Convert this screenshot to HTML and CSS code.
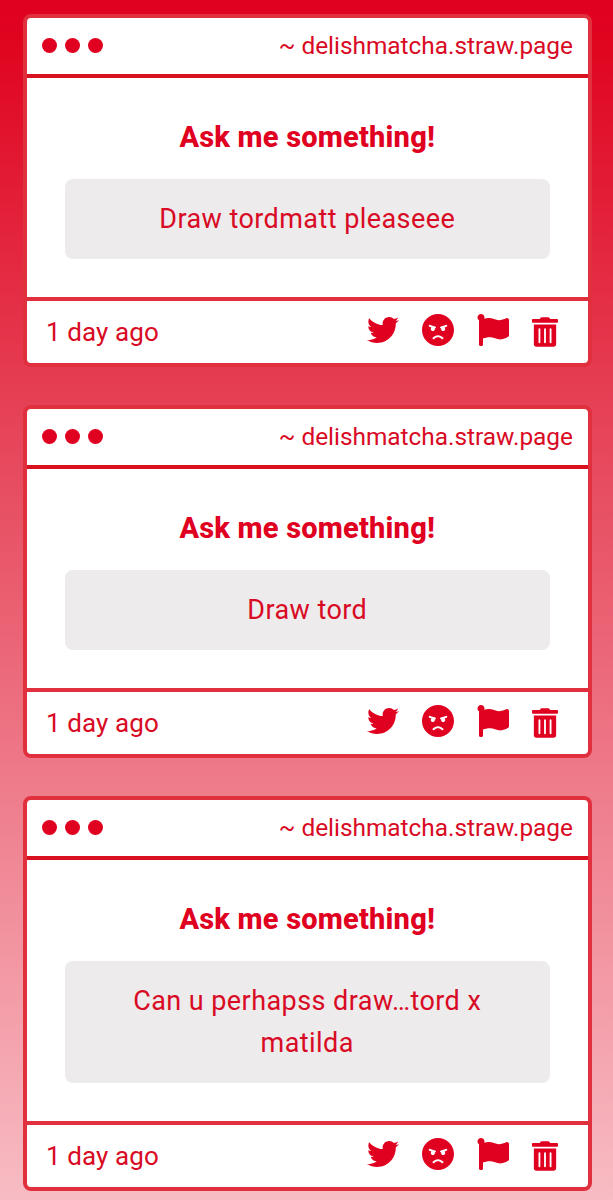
FILE: index.html
```html
<!DOCTYPE html>
<html lang="en">
<head>
    <meta charset="UTF-8">
    <meta name="viewport" content="width=device-width, initial-scale=1.0">
    <title>Inbox</title>
    <link rel="stylesheet" href="styles.css">
</head>
<body>
    <!-- icons shared by every card -->
    <svg class="sprite">
        <symbol id="twitter" viewBox="0 0 512 512"><path d="M459.37 151.716c.325 4.548.325 9.097.325 13.645 0 138.72-105.583 298.558-298.558 298.558-59.452 0-114.68-17.219-161.137-47.106 8.447.974 16.568 1.299 25.34 1.299 49.055 0 94.213-16.568 130.274-44.832-46.132-.975-84.792-31.188-98.112-72.772 6.498.974 12.995 1.624 19.818 1.624 9.421 0 18.843-1.3 27.614-3.573-48.081-9.747-84.143-51.98-84.143-102.985v-1.299c13.969 7.797 30.214 12.67 47.431 13.319-28.264-18.843-46.781-51.005-46.781-87.391 0-19.492 5.197-37.36 14.294-52.954 51.655 63.675 129.3 105.258 216.365 109.807-1.624-7.797-2.599-15.918-2.599-24.04 0-57.828 46.782-104.934 104.934-104.934 30.213 0 57.502 12.67 76.67 33.137 23.715-4.548 46.456-13.32 66.599-25.34-7.798 24.366-24.366 44.833-46.132 57.827 21.117-2.273 41.584-8.122 60.426-16.243-14.292 20.791-32.161 39.308-52.628 54.253z"/></symbol>
        <symbol id="angry" viewBox="0 8 496 496"><path d="M248 8C111 8 0 119 0 256s111 248 248 248 248-111 248-248S385 8 248 8zM136 240c0-9.3 4.1-17.5 10.5-23.4l-31-9.3c-8.5-2.5-13.3-11.5-10.7-19.9 2.5-8.5 11.4-13.2 19.9-10.7l80 24c8.5 2.5 13.3 11.5 10.7 19.9-2.1 6.9-8.4 11.4-15.3 11.4-.5 0-1.1-.2-1.7-.2.7 2.7 1.7 5.3 1.7 8.2 0 17.7-14.3 32-32 32S136 257.7 136 240zm168 154.2c-27.8-33.4-84.2-33.4-112.1 0-13.5 16.3-38.2-4.2-24.6-20.5 20-24 49.4-37.8 80.6-37.8s60.6 13.8 80.6 37.8c13.8 16.5-11.1 36.6-24.5 20.5zm76.6-186.9l-31 9.3c6.3 5.8 10.5 14.1 10.5 23.4 0 17.7-14.3 32-32 32s-32-14.3-32-32c0-2.9.9-5.6 1.7-8.2-.6.1-1.1.2-1.7.2-6.9 0-13.2-4.5-15.3-11.4-2.5-8.5 2.3-17.4 10.7-19.9l80-24c8.4-2.5 17.4 2.3 19.9 10.7 2.5 8.5-2.3 17.4-10.8 19.9z"/></symbol>
        <symbol id="flag" viewBox="0 0 512 512"><path d="M349.565 98.783C295.978 98.783 251.721 64 184.348 64c-24.955 0-47.309 4.384-68.045 12.013a55.947 55.947 0 0 0 3.586-23.562C118.117 24.015 94.806 1.206 66.338.048 34.345-1.254 8 24.296 8 56c0 19.026 9.497 35.825 24 45.945V488c0 13.255 10.745 24 24 24h16c13.255 0 24-10.745 24-24v-94.4c28.311-12.064 63.582-22.122 114.435-22.122 53.588 0 97.844 34.783 165.217 34.783 48.169 0 86.667-16.294 122.505-40.858C506.84 359.452 512 349.571 512 339.045v-243.1c0-23.393-24.269-38.87-45.485-29.016-34.338 15.948-76.454 31.854-116.95 31.854z"/></symbol>
        <symbol id="trash" viewBox="0 0 448 512"><path d="M32 464a48 48 0 0 0 48 48h288a48 48 0 0 0 48-48V128H32zm272-256a16 16 0 0 1 32 0v224a16 16 0 0 1-32 0zm-96 0a16 16 0 0 1 32 0v224a16 16 0 0 1-32 0zm-96 0a16 16 0 0 1 32 0v224a16 16 0 0 1-32 0zM432 32H312l-9.4-18.7A24 24 0 0 0 281.1 0H166.8a23.72 23.72 0 0 0-21.4 13.3L136 32H16A16 16 0 0 0 0 48v32a16 16 0 0 0 16 16h416a16 16 0 0 0 16-16V48a16 16 0 0 0-16-16z"/></symbol>
    </svg>

    <div class="card">
        <div class="card-header">
            <div class="dots"><span></span><span></span><span></span></div>
            <div class="site">~ delishmatcha.straw.page</div>
        </div>
        <div class="card-body">
            <div class="title">Ask me something!</div>
            <div class="message">Draw tordmatt pleaseee</div>
        </div>
        <div class="card-footer">
            <div class="time">1 day ago</div>
            <div class="icons">
                <svg class="icon"><use href="#twitter"/></svg>
                <svg class="icon"><use href="#angry"/></svg>
                <svg class="icon"><use href="#flag"/></svg>
                <svg class="icon trash"><use href="#trash"/></svg>
            </div>
        </div>
    </div>

    <div class="card">
        <div class="card-header">
            <div class="dots"><span></span><span></span><span></span></div>
            <div class="site">~ delishmatcha.straw.page</div>
        </div>
        <div class="card-body">
            <div class="title">Ask me something!</div>
            <div class="message">Draw tord</div>
        </div>
        <div class="card-footer">
            <div class="time">1 day ago</div>
            <div class="icons">
                <svg class="icon"><use href="#twitter"/></svg>
                <svg class="icon"><use href="#angry"/></svg>
                <svg class="icon"><use href="#flag"/></svg>
                <svg class="icon trash"><use href="#trash"/></svg>
            </div>
        </div>
    </div>

    <div class="card">
        <div class="card-header">
            <div class="dots"><span></span><span></span><span></span></div>
            <div class="site">~ delishmatcha.straw.page</div>
        </div>
        <div class="card-body">
            <div class="title">Ask me something!</div>
            <div class="message">Can u perhapss draw…tord x matilda</div>
        </div>
        <div class="card-footer">
            <div class="time">1 day ago</div>
            <div class="icons">
                <svg class="icon"><use href="#twitter"/></svg>
                <svg class="icon"><use href="#angry"/></svg>
                <svg class="icon"><use href="#flag"/></svg>
                <svg class="icon trash"><use href="#trash"/></svg>
            </div>
        </div>
    </div>
</body>
</html>
```
FILE: styles.css
```css
*{
    box-sizing: border-box;
}
body{
    margin: 0;
    height: 1200px;
    overflow: hidden;
    padding: 14px 21px 0 23px;
    background: linear-gradient(to bottom, #e0001f 0, #e0041f 40px, #e64459 430px, #f8bcc4 1200px);
    font-family: Roboto, sans-serif;
    color: #d90a24;
}
.sprite{
    display: none;
}
.card{
    height: 353px;
    margin-bottom: 38px;
    display: flex;
    flex-direction: column;
    background-color: white;
    border: 4px solid #e0303e;
    border-radius: 8px;
}
.card:last-child{
    height: 395px;
}
.card-header{
    height: 60px;
    flex: none;
    display: flex;
    justify-content: space-between;
    align-items: center;
    padding: 0 15px 1px;
    border-bottom: 4px solid #d9101f;
}
.dots{
    display: flex;
    gap: 8px;
}
.dots span{
    width: 15px;
    height: 15px;
    border-radius: 50%;
    background-color: #e0001f;
}
.site{
    font-size: 24.4px;
    padding-bottom: 1px;
}
.card-body{
    flex: 1;
    padding: 38px 38px 0 37.5px;
    text-align: center;
}
.title{
    font-size: 29px;
    line-height: 42px;
    font-weight: 800;
    letter-spacing: 0.2px;
    color: #e0001f;
}
.message{
    margin-top: 21px;
    padding: 19px 60px;
    border-radius: 8px;
    background-color: #edebec;
    font-size: 27px;
    line-height: 42px;
    letter-spacing: 0.43px;
}
.card-footer{
    height: 66px;
    flex: none;
    display: flex;
    justify-content: space-between;
    align-items: center;
    padding: 0 30px 1px 19px;
    border-top: 4px solid #e0303e;
}
.time{
    font-size: 26px;
    letter-spacing: 0.1px;
}
.icons{
    display: flex;
    gap: 23px;
    padding-bottom: 3px;
}
.icon{
    width: 32px;
    height: 32px;
    fill: #e0001f;
}
.icon.trash{
    width: 26px;
    height: 30px;
    margin-top: 3px;
}
```
